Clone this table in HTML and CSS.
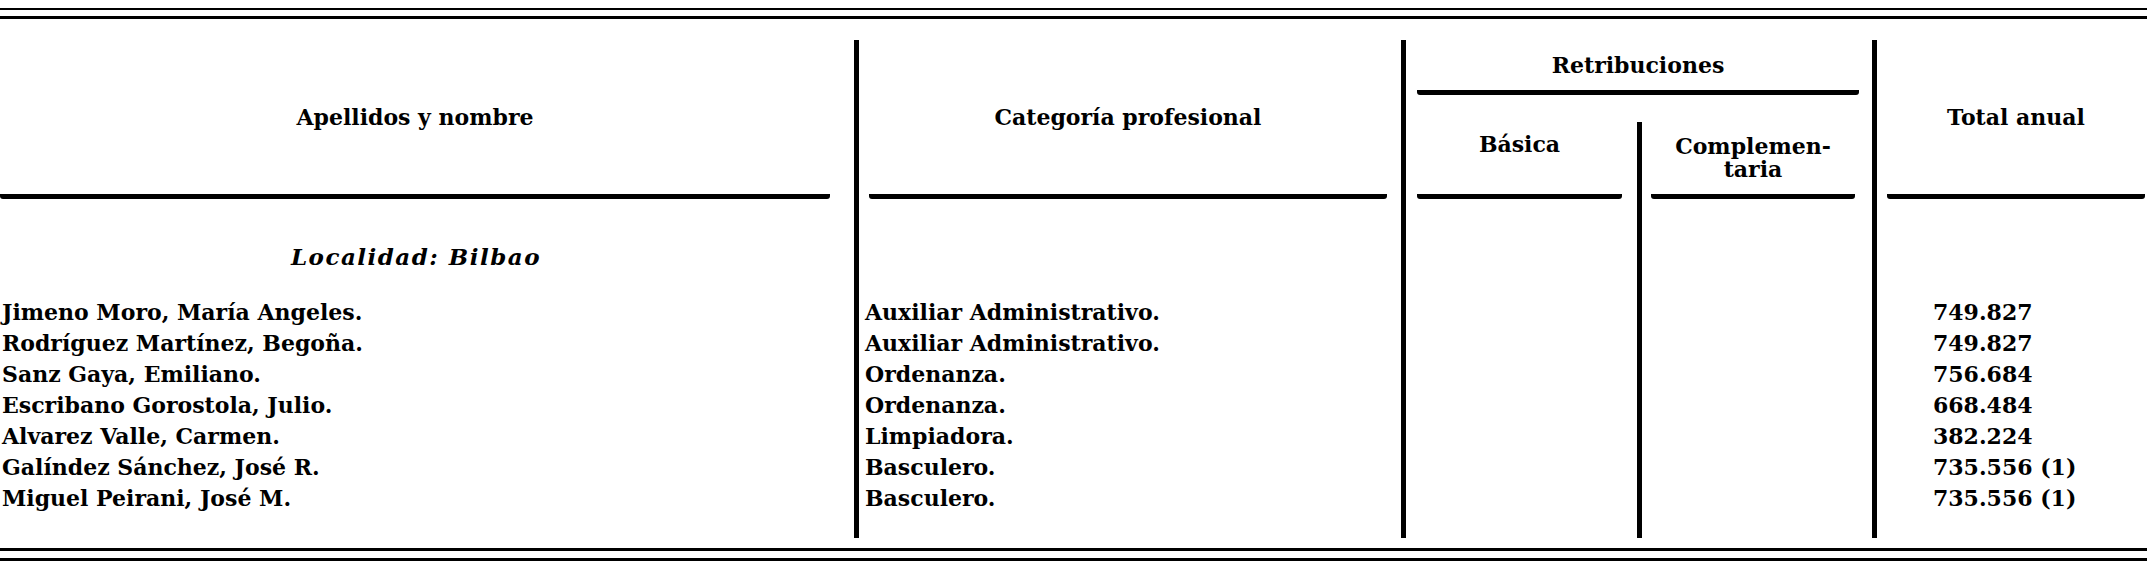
FILE: index.html
```html
<!DOCTYPE html>
<html lang="es">
<head>
<meta charset="utf-8">
<title>Relación de personal - Localidad: Bilbao</title>
<link rel="stylesheet" href="styles.css">
</head>
<body>
<div class="sheet">
  <div class="rule rule-top"></div>
  <div class="table">
    <div class="col col-name">
      <div class="head">Apellidos y nombre</div>
      <div class="body">
        <div class="locality">Localidad: Bilbao</div>
        <ul class="lines">
          <li>Jimeno Moro, María Angeles.</li>
          <li>Rodríguez Martínez, Begoña.</li>
          <li>Sanz Gaya, Emiliano.</li>
          <li>Escribano Gorostola, Julio.</li>
          <li>Alvarez Valle, Carmen.</li>
          <li>Galíndez Sánchez, José R.</li>
          <li>Miguel Peirani, José M.</li>
        </ul>
      </div>
    </div>
    <div class="col col-cat">
      <div class="head">Categoría profesional</div>
      <div class="body">
        <ul class="lines">
          <li>Auxiliar Administrativo.</li>
          <li>Auxiliar Administrativo.</li>
          <li>Ordenanza.</li>
          <li>Ordenanza.</li>
          <li>Limpiadora.</li>
          <li>Basculero.</li>
          <li>Basculero.</li>
        </ul>
      </div>
    </div>
    <div class="col col-ret">
      <div class="ret-title">Retribuciones</div>
      <div class="ret-sub">
        <div class="sub sub-basic">
          <div class="head">Básica</div>
        </div>
        <div class="sub sub-comp">
          <div class="head">Complemen-<br>taria</div>
        </div>
      </div>
    </div>
    <div class="col col-total">
      <div class="head">Total anual</div>
      <div class="body">
        <ul class="lines nums">
          <li>749.827</li>
          <li>749.827</li>
          <li>756.684</li>
          <li>668.484</li>
          <li>382.224</li>
          <li>735.556 (1)</li>
          <li>735.556 (1)</li>
        </ul>
      </div>
    </div>
  </div>
  <div class="rule rule-bottom"></div>
</div>
</body>
</html>
```
FILE: styles.css
```css
html, body {
  margin: 0;
  padding: 0;
  background: #fff;
}

body {
  color: #000;
  font-family: "DejaVu Serif", "Liberation Serif", serif;
}

.sheet {
  width: 2147px;
  height: 568px;
  overflow: hidden;
}

.rule-top {
  margin-top: 8px;
  height: 6px;
  border-top: 2px solid #000;
  border-bottom: 3px solid #000;
}

.rule-bottom {
  margin-top: 10px;
  height: 7px;
  border-top: 3px solid #000;
  border-bottom: 3px solid #000;
}

.table {
  display: grid;
  grid-template-columns: 854px 547px 471px 275px;
  height: 498px;
  margin-top: 21px;
}

.col {
  display: flex;
  flex-direction: column;
  min-width: 0;
  box-sizing: border-box;
}

.col + .col {
  border-left: 5px solid #000;
}

.head,
.ret-title {
  box-sizing: border-box;
  display: flex;
  align-items: center;
  justify-content: center;
  text-align: center;
  font-weight: bold;
  font-size: 22px;
  line-height: 23px;
  border-bottom: 5px solid #000;
  border-radius: 0 0 3px 3px;
  white-space: nowrap;
}

.head {
  height: 159px;
  flex: none;
}

.col-name .head {
  margin-right: 24px;
}

.col-cat .head {
  margin: 0 14px 0 10px;
}

.col-total .head {
  margin: 0 2px 0 10px;
}

.ret-title {
  height: 55px;
  margin: 0 13px 0 11px;
}

.ret-sub {
  display: flex;
  flex: 1;
}

.sub-basic {
  width: 231px;
  flex: none;
}

.sub-basic .head {
  height: 104px;
  margin: 0 15px 0 11px;
}

.sub-comp {
  flex: 1;
  margin-top: 27px;
  border-left: 5px solid #000;
}

.sub-comp .head {
  height: 77px;
  margin: 0 17px 0 9px;
}

.body {
  font-size: 22px;
  line-height: 31px;
  font-weight: bold;
  white-space: nowrap;
}

.col-name .body {
  padding: 42px 0 0 2px;
}

.locality {
  font-style: italic;
  font-size: 23px;
  letter-spacing: 1.5px;
  text-align: center;
  padding-right: 24px;
  margin-bottom: 25px;
}

.col-cat .body {
  padding: 98px 0 0 6px;
}

.col-total .body {
  padding: 98px 0 0 56px;
}

.lines {
  list-style: none;
  margin: 0;
  padding: 0;
}
```
